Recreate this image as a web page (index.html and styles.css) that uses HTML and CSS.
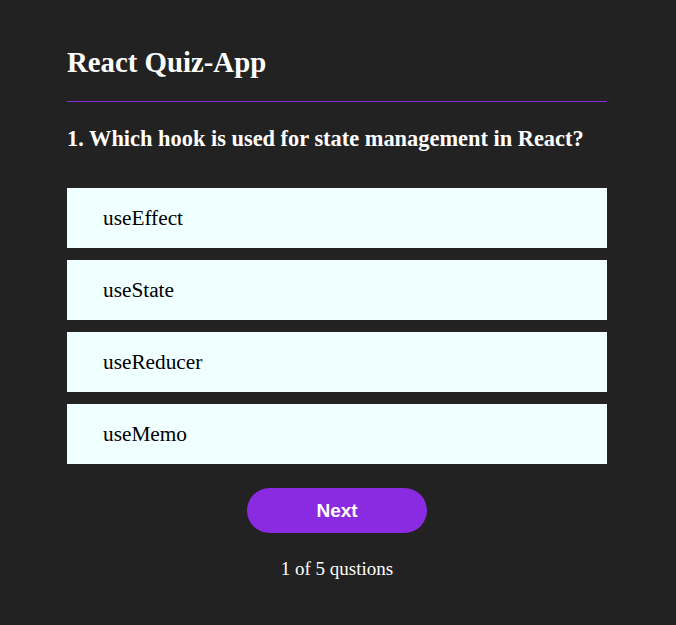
FILE: index.html
```html
<!DOCTYPE html>
<html lang="en">
<head>
<meta charset="utf-8">
<title>React Quiz-App</title>
<link rel="stylesheet" href="styles.css">
</head>
<body>
<main class="quiz">
  <h1 class="title">React Quiz-App</h1>
  <hr class="divider">
  <h2 class="question">1. Which hook is used for state management in React?</h2>
  <ul class="options">
    <li class="option">useEffect</li>
    <li class="option">useState</li>
    <li class="option">useReducer</li>
    <li class="option">useMemo</li>
  </ul>
  <button class="next" type="button">Next</button>
  <p class="progress">1 of 5 qustions</p>
</main>
</body>
</html>
```
FILE: styles.css
```css
html, body {
  margin: 0;
  padding: 0;
  background: #222222;
  font-family: "Liberation Serif", "Times New Roman", serif;
}

.quiz {
  width: 540px;
  margin-left: 67px;
  padding-top: 46px;
  display: flex;
  flex-direction: column;
}

.title {
  margin: 0;
  font-size: 28.8px;
  line-height: 32px;
  font-weight: bold;
  color: #ffffff;
}

.divider {
  margin: 23px 0 0 0;
  border: none;
  border-top: 1px solid #8a2be2;
  height: 0;
}

.question {
  margin: 24px 0 0 0;
  font-size: 22.4px;
  line-height: 26px;
  font-weight: bold;
  color: #ffffff;
}

.options {
  list-style: none;
  margin: 36px 0 0 0;
  padding: 0;
  display: flex;
  flex-direction: column;
  gap: 12px;
}

.option {
  height: 60px;
  line-height: 60px;
  padding-left: 36px;
  background: #f0ffff;
  color: #000000;
  font-size: 21.3px;
}

.next {
  align-self: center;
  margin-top: 24px;
  width: 180px;
  height: 45px;
  border: none;
  border-radius: 23px;
  background: #8a2be2;
  color: #ffffff;
  font-family: "Liberation Sans", Arial, sans-serif;
  font-weight: bold;
  font-size: 19px;
  padding: 0;
}

.progress {
  margin: 25px 0 0 0;
  text-align: center;
  color: #ffffff;
  font-size: 19px;
  line-height: 22px;
}
```
